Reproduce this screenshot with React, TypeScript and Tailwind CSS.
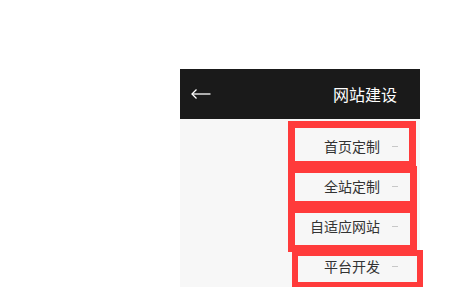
const items = ["首页定制", "全站定制", "自适应网站", "平台开发"];

// annotation boxes drawn over the menu
const marks = [
  "left-[288px] top-[121px] w-[128px] h-[47px] border-[7px]",
  "left-[288px] top-[166px] w-[129px] h-[42px] border-[7px]",
  "left-[288px] top-[206px] w-[129px] h-[46px] border-[7px]",
  "left-[292px] top-[250px] w-[131px] h-[38px] border-[6px]",
];

export default function App() {
  return (
    <div
      className="relative w-full h-[287px] overflow-hidden bg-white"
      style={{ fontFamily: '"Noto Sans CJK SC", "Noto Sans", sans-serif' }}
    >
      <div className="ml-[180px] pt-[69px] w-[240px]">
        <div className="h-[50px] bg-[#1a1a1a] flex items-center justify-between pl-[11px] pr-[23px]">
          <svg width="20" height="12" viewBox="0 0 20 12" fill="none" stroke="white" strokeWidth="1.3">
            <path d="M1 6h18.5" />
            <path d="M5.5 1.5L1 6l4.5 4.5" />
          </svg>
          <span className="text-white text-base leading-none">网站建设</span>
        </div>
        <div className="bg-[#f7f7f7] h-[200px] pt-[7px]">
          {items.map((t) => (
            <div key={t} className="h-10 flex items-center justify-end pr-[22px]">
              <span className="text-[14px] text-[#333] leading-none">{t}</span>
              <span className="ml-3 w-[6px] h-px bg-[#c8c8c8]" />
            </div>
          ))}
        </div>
      </div>
      {marks.map((m) => (
        <div key={m} className={`absolute pointer-events-none border-[#ff3b3b] ${m}`} />
      ))}
    </div>
  );
}
